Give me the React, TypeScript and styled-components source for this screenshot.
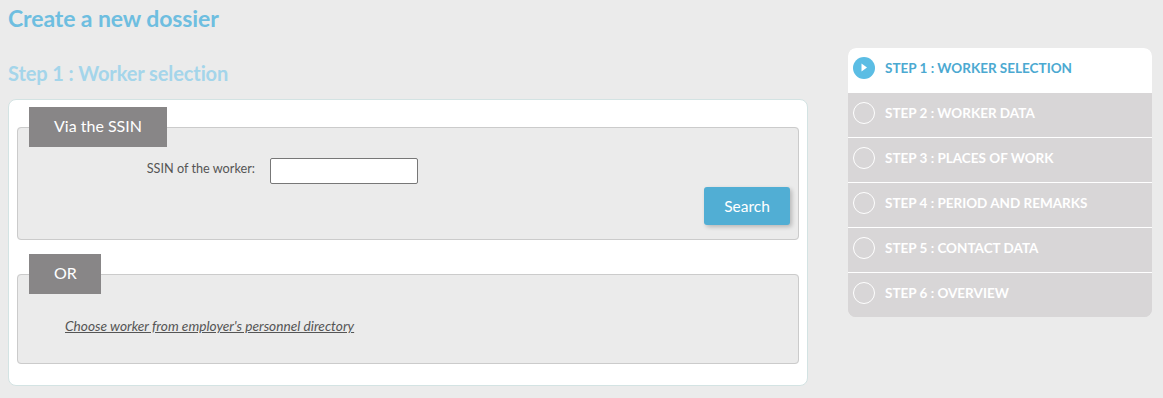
import React from "react";
import styled, { createGlobalStyle } from "styled-components";

const Global = createGlobalStyle`
  html, body { margin: 0; padding: 0; background: #ebebeb; }
  body { font-family: Lato, "Open Sans", sans-serif; color: #555; }
`;

const Page = styled.div`
  padding: 0 12px 0 8px;
`;

const Title = styled.h1`
  margin: 0;
  padding-top: 4px;
  height: 43px;
  box-sizing: border-box;
  font-size: 23px;
  line-height: 28px;
  font-weight: 700;
  color: #6ebee0;
  letter-spacing: -0.1px;
`;

const Layout = styled.div`
  display: grid;
  grid-template-columns: 800px 304px;
  column-gap: 40px;
  align-items: start;
  margin-top: 5px;
`;

const MainCol = styled.div`
  display: flex;
  flex-direction: column;
`;

const StepHeading = styled.h2`
  margin: 0;
  height: 51px;
  box-sizing: border-box;
  padding-bottom: 2px;
  display: flex;
  align-items: center;
  font-size: 20px;
  font-weight: 700;
  color: #a4d5ea;
  letter-spacing: -0.1px;
`;

const Card = styled.div`
  background: #fff;
  border: 1px solid #d3e3e3;
  border-radius: 8px;
  padding: 7px 8px 21px 8px;
  display: flex;
  flex-direction: column;
  gap: 14px;
`;

const Box = styled.fieldset`
  margin: 0;
  padding: 0 0 0 11px;
  background: #ebebeb;
  border: 1px solid #cbcbcb;
  border-radius: 4px;
  display: flex;
  flex-direction: column;
`;

const Tab = styled.legend<{ $w: number }>`
  width: ${(p) => p.$w}px;
  box-sizing: border-box;
  height: 40px;
  padding: 0 0 0 25px;
  background: #888687;
  color: #fff;
  font-size: 16px;
  line-height: 38px;
`;

const FieldRow = styled.div`
  display: grid;
  grid-template-columns: 237px 148px;
  column-gap: 15px;
  align-items: center;
  margin-top: 11px;
  margin-left: -11px;
`;

const Label = styled.label`
  text-align: right;
  font-size: 12.7px;
  color: #555;
  padding-bottom: 6px;
`;

const Input = styled.input`
  box-sizing: border-box;
  width: 148px;
  height: 26px;
  border: 1px solid #777;
  border-radius: 2px;
  background: #fff;
  padding: 0 4px;
  font-family: inherit;
`;

const Actions = styled.div`
  display: flex;
  justify-content: flex-end;
  padding: 3px 8px 14px 0;
`;

const Button = styled.button`
  width: 86px;
  height: 38px;
  border: none;
  border-radius: 3px;
  background: #51aed4;
  color: #fff;
  font-family: inherit;
  font-size: 15.5px;
  box-shadow: 2px 2px 4px rgba(0, 0, 0, 0.22);
  cursor: pointer;
`;

const LinkRow = styled.div`
  padding: 21px 0 29px 36px;
`;

const Link = styled.a`
  font-size: 13.7px;
  font-style: italic;
  color: #555;
  text-decoration: underline;
  cursor: pointer;
`;

const Steps = styled.ol`
  list-style: none;
  margin: 0;
  padding: 0;
  border-radius: 8px;
  overflow: hidden;
  background: #d8d6d7;
`;

const Step = styled.li<{ $active?: boolean }>`
  height: 45px;
  display: flex;
  align-items: center;
  gap: 10px;
  padding: 0 0 5px 5px;
  box-sizing: border-box;
  background: ${(p) => (p.$active ? "#fff" : "#d8d6d7")};
  color: ${(p) => (p.$active ? "#4ba9d1" : "#fff")};
  font-size: 13.5px;
  font-weight: 700;
  border-bottom: 1px solid #fff;
  &:last-child { border-bottom: none; height: 44px; }
`;

const Dot = styled.span<{ $active?: boolean }>`
  flex: none;
  width: 22px;
  height: 22px;
  box-sizing: border-box;
  border-radius: 50%;
  display: flex;
  align-items: center;
  justify-content: center;
  background: ${(p) => (p.$active ? "#5bbde4" : "transparent")};
  border: ${(p) => (p.$active ? "none" : "1.5px solid #fff")};
`;

const steps = [
  "STEP 1 : WORKER SELECTION",
  "STEP 2 : WORKER DATA",
  "STEP 3 : PLACES OF WORK",
  "STEP 4 : PERIOD AND REMARKS",
  "STEP 5 : CONTACT DATA",
  "STEP 6 : OVERVIEW",
];

export default function App() {
  return (
    <>
      <Global />
      <Page>
        <Title>Create a new dossier</Title>
        <Layout>
          <MainCol>
            <StepHeading>Step 1 : Worker selection</StepHeading>
            <Card>
              <Box>
                <Tab $w={138}>Via the SSIN</Tab>
                <FieldRow>
                  <Label htmlFor="ssin">SSIN of the worker:</Label>
                  <Input id="ssin" type="text" />
                </FieldRow>
                <Actions>
                  <Button type="button">Search</Button>
                </Actions>
              </Box>
              <Box>
                <Tab $w={72}>OR</Tab>
                <LinkRow>
                  <Link>Choose worker from employer's personnel directory</Link>
                </LinkRow>
              </Box>
            </Card>
          </MainCol>
          <Steps>
            {steps.map((s, i) => (
              <Step key={s} $active={i === 0}>
                <Dot $active={i === 0}>
                  {i === 0 && (
                    <svg width="8" height="9" viewBox="0 0 8 9">
                      <path d="M1.5 0.5 L7 4.5 L1.5 8.5 Z" fill="#fff" />
                    </svg>
                  )}
                </Dot>
                {s}
              </Step>
            ))}
          </Steps>
        </Layout>
      </Page>
    </>
  );
}
